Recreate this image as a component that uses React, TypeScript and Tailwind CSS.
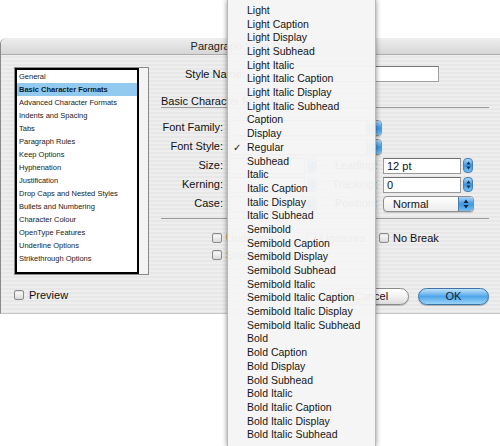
import React from "react";

const menuItems = [
  "Light",
  "Light Caption",
  "Light Display",
  "Light Subhead",
  "Light Italic",
  "Light Italic Caption",
  "Light Italic Display",
  "Light Italic Subhead",
  "Caption",
  "Display",
  "Regular",
  "Subhead",
  "Italic",
  "Italic Caption",
  "Italic Display",
  "Italic Subhead",
  "Semibold",
  "Semibold Caption",
  "Semibold Display",
  "Semibold Subhead",
  "Semibold Italic",
  "Semibold Italic Caption",
  "Semibold Italic Display",
  "Semibold Italic Subhead",
  "Bold",
  "Bold Caption",
  "Bold Display",
  "Bold Subhead",
  "Bold Italic",
  "Bold Italic Caption",
  "Bold Italic Display",
  "Bold Italic Subhead",
];

const sections = [
  "General",
  "Basic Character Formats",
  "Advanced Character Formats",
  "Indents and Spacing",
  "Tabs",
  "Paragraph Rules",
  "Keep Options",
  "Hyphenation",
  "Justification",
  "Drop Caps and Nested Styles",
  "Bullets and Numbering",
  "Character Colour",
  "OpenType Features",
  "Underline Options",
  "Strikethrough Options",
];

// little up/down triangles used on aqua popups and steppers
function Arrows() {
  return (
    <svg width="6" height="10" viewBox="0 0 6 10">
      <path d="M3 0.5 L5.5 4 L0.5 4 Z" fill="#0d2a44" />
      <path d="M3 9.5 L5.5 6 L0.5 6 Z" fill="#0d2a44" />
    </svg>
  );
}

function Checkbox() {
  return (
    <span className="inline-block w-[10px] h-[10px] shrink-0 rounded-[2px] border border-[#8c8c8c] bg-gradient-to-b from-white to-[#d9d9d9] shadow-[inset_0_1px_1px_rgba(0,0,0,0.12)]" />
  );
}

function Popup({ value, width }: { value?: string; width: string }) {
  return (
    <div
      className={`${width} h-[16px] flex rounded-[4px] border border-[#8e8e8e] bg-gradient-to-b from-white to-[#ececec] overflow-hidden shadow-[0_1px_1px_rgba(0,0,0,0.15)]`}
    >
      <div className="flex-1 pl-[9px] text-[11px] leading-[14px] text-[#111]">
        {value}
      </div>
      <div className="w-[15px] flex items-center justify-center bg-gradient-to-b from-[#a9d6f7] via-[#3c96e2] to-[#74bdf1] border-l border-[#4a7fb0]">
        <Arrows />
      </div>
    </div>
  );
}

function Field({ value, width }: { value?: string; width: string }) {
  return (
    <div className={`${width} h-[16px] flex items-center`}>
      <div className="flex-1 h-full bg-white border border-[#9a9a9a] border-t-[#6f6f6f] pl-[3px] text-[11px] leading-[14px] text-[#111]">
        {value}
      </div>
      <div className="ml-[2px] w-[10px] h-[15px] rounded-[4px] flex items-center justify-center bg-gradient-to-b from-[#a9d6f7] via-[#3c96e2] to-[#74bdf1] border border-[#4a7fb0]">
        <svg width="5" height="9" viewBox="0 0 5 9">
          <path d="M2.5 0.5 L4.5 3.5 L0.5 3.5 Z" fill="#0d2a44" />
          <path d="M2.5 8.5 L4.5 5.5 L0.5 5.5 Z" fill="#0d2a44" />
        </svg>
      </div>
    </div>
  );
}

export default function App() {
  return (
    <div className="relative w-[500px] h-[446px] bg-white overflow-hidden font-['Liberation_Sans',Arial,sans-serif] text-[#111]">
      {/* Dialog */}
      <div className="mt-[38px] h-[276px] w-[500px] flex flex-col rounded-tl-[6px] border-l border-b border-[#8a8a8a] border-b-[#c4c4c4] overflow-hidden bg-[repeating-linear-gradient(180deg,#eeeeee_0px,#eeeeee_2px,#e7e7e7_2px,#e7e7e7_4px)]">
        {/* Title bar */}
        <div className="h-[17px] shrink-0 bg-gradient-to-b from-[#eeeeee] to-[#d6d6d6] border-b border-[#ababab] text-center text-[11px] leading-[17px] text-[#222]">
          Paragraph Style Options
        </div>

        <div className="flex flex-1">
          {/* Left column: section list */}
          <div className="w-[160px] shrink-0 pl-[13px] pt-[12px]">
            <div className="w-[135px] h-[208px] flex border border-[#8a8a8a] bg-[#f2f2f2]">
              <div className="w-[124px] h-full border-2 border-black bg-white">
                {sections.map((s, i) => (
                  <div
                    key={s}
                    className={
                      i === 1
                        ? "h-[13px] leading-[13px] pl-[2px] text-[7.5px] font-bold text-[#0c1a2a] bg-[#92caef]"
                        : "h-[13px] leading-[13px] pl-[2px] text-[7.5px] text-[#222]"
                    }
                  >
                    {s}
                  </div>
                ))}
              </div>
              <div className="flex-1 bg-[#f4f4f4]" />
            </div>
            <div className="mt-[15px] flex items-center gap-[5px] h-[10px]">
              <Checkbox />
              <span className="text-[11px] leading-[12px]">Preview</span>
            </div>
          </div>

          {/* Right column: settings */}
          <div className="w-[328px] shrink-0 pt-[11px] flex flex-col">
            <div className="h-[16px] flex items-center">
              <span className="ml-[24px] text-[11px]">Style Name:</span>
              <div className="ml-[6px] w-[188px] h-[16px] bg-white border border-[#a0a0a0] border-t-[#777]" />
            </div>

            <div className="mt-[13px] h-[13px] border-b border-[#9a9a9a] text-[11px] leading-[12px]">
              Basic Character Formats
            </div>

            <div className="mt-[10px] flex flex-col">
              <div className="h-[19px] flex items-center">
                <span className="w-[62px] text-right text-[11px]">Font Family:</span>
                <div className="ml-[6px]">
                  <Popup width="w-[153px]" />
                </div>
              </div>
              <div className="h-[19px] flex items-center">
                <span className="w-[62px] text-right text-[11px]">Font Style:</span>
                <div className="ml-[6px]">
                  <Popup width="w-[153px]" />
                </div>
              </div>
              <div className="h-[19px] flex items-center">
                <span className="w-[62px] text-right text-[11px]">Size:</span>
                <div className="ml-[6px]">
                  <Field width="w-[88px]" />
                </div>
                <span className="flex-1 text-right text-[11px]">Leading:</span>
                <div className="ml-[6px] mr-[16px]">
                  <Field value="12 pt" width="w-[90px]" />
                </div>
              </div>
              <div className="h-[19px] flex items-center">
                <span className="w-[62px] text-right text-[11px]">Kerning:</span>
                <div className="ml-[6px]">
                  <Field width="w-[88px]" />
                </div>
                <span className="flex-1 text-right text-[11px]">Tracking:</span>
                <div className="ml-[6px] mr-[16px]">
                  <Field value="0" width="w-[90px]" />
                </div>
              </div>
              <div className="h-[19px] flex items-center">
                <span className="w-[62px] text-right text-[11px]">Case:</span>
                <div className="ml-[6px]">
                  <Popup width="w-[88px]" />
                </div>
                <span className="flex-1 text-right text-[11px]">Position:</span>
                <div className="ml-[6px] mr-[15px]">
                  <Popup value="Normal" width="w-[91px]" />
                </div>
              </div>
            </div>

            <div className="mt-[5px] border-b border-[#9a9a9a]" />

            <div className="mt-[13px] h-[12px] flex items-center pl-[51px] text-[11px]">
              <div className="w-[94px] flex items-center gap-[4px]">
                <Checkbox />
                <span>Underline</span>
              </div>
              <div className="w-[73px] flex items-center gap-[4px]">
                <Checkbox />
                <span>Ligatures</span>
              </div>
              <div className="flex items-center gap-[4px]">
                <Checkbox />
                <span>No Break</span>
              </div>
            </div>
            <div className="mt-[5px] h-[12px] flex items-center pl-[51px] text-[11px]">
              <div className="flex items-center gap-[4px]">
                <Checkbox />
                <span>Strikethrough</span>
              </div>
            </div>

            <div className="mt-[27px] flex justify-end gap-[9px]">
              <div className="w-[76px] h-[17px] rounded-full border border-[#8a8a8a] bg-gradient-to-b from-white via-[#f1f1f1] to-[#dcdcdc] text-center text-[11px] leading-[15px] shadow-[0_1px_1px_rgba(0,0,0,0.2)]">
                Cancel
              </div>
              <div className="w-[71px] h-[17px] rounded-full border border-[#3b73a8] bg-gradient-to-b from-[#bfe2fa] via-[#4ea6ea] to-[#9ad3f7] text-center text-[11px] leading-[15px] text-[#0b2238] shadow-[0_1px_1px_rgba(0,0,0,0.25)]">
                OK
              </div>
            </div>
          </div>
        </div>
      </div>

      {/* Font Style pop-up menu, open over the dialog */}
      <div className="absolute left-[227px] top-0 w-[149px] h-[446px] pt-[4px] bg-[#f5f5f5]/[0.96] shadow-[0_0_5px_rgba(0,0,0,0.45)] border-l border-r border-[#b8b8b8]">
        {menuItems.map((m) => (
          <div key={m} className="h-[13.7px] flex items-center text-[10.5px] text-[#151515]">
            <span className="w-[19px] pl-[5px] text-[10px]">{m === "Regular" ? "✓" : ""}</span>
            <span>{m}</span>
          </div>
        ))}
      </div>
    </div>
  );
}
